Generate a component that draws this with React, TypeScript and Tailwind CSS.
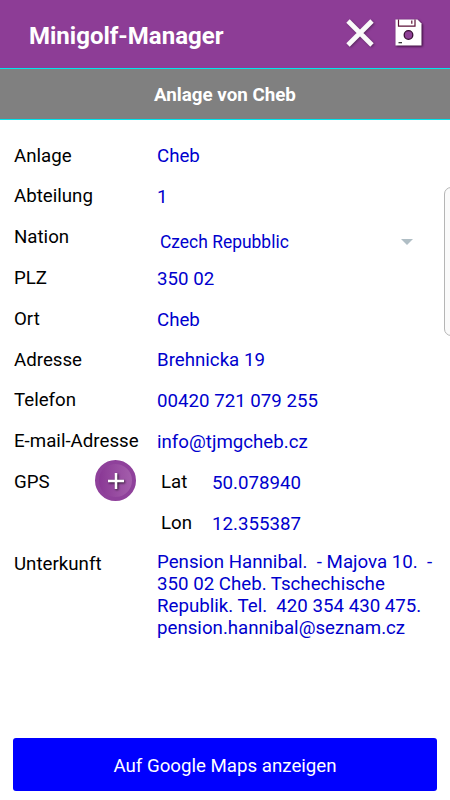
import React from 'react';

const FIELDS = [
  { label: 'Anlage', value: 'Cheb' },
  { label: 'Abteilung', value: '1' },
  { label: 'Nation', value: 'Czech Repubblic', select: true },
  { label: 'PLZ', value: '350 02' },
  { label: 'Ort', value: 'Cheb' },
  { label: 'Adresse', value: 'Brehnicka 19' },
  { label: 'Telefon', value: '00420 721 079 255' },
  { label: 'E-mail-Adresse', value: 'info@tjmgcheb.cz' },
];

const CloseIcon = () => (
  <svg width="30" height="30" viewBox="0 0 30 30" className="drop-shadow-[1px_1px_1px_rgba(0,0,0,0.35)]">
    <path d="M3 3 27 27M27 3 3 27" stroke="#fafafa" strokeWidth="4.8" fill="none" />
  </svg>
);

const SaveIcon = () => (
  <svg width="28" height="28" viewBox="0 0 28 28" className="drop-shadow-[1.5px_1.5px_1px_rgba(40,0,40,0.9)]">
    <path d="M0.5 0.5H22.5L26.5 4.5V26.5H0.5Z" fill="#fff" />
    <path d="M3.5 0.5V7.2H20V0.5M16.8 1.5V4.8" stroke="#5c1238" strokeWidth="1.2" fill="none" />
    <circle cx="13.5" cy="16" r="4.3" fill="#8e4096" stroke="#3a0d35" strokeWidth="1.3" />
    <path d="M3.5 23.7H7" stroke="#222" strokeWidth="1.2" />
  </svg>
);

const AddButton = () => (
  <button className="flex h-[41px] w-[41px] shrink-0 items-center justify-center rounded-full border-4 border-[#8f419b] bg-linear-to-r from-[#8a3895] to-[#a45eac]">
    <svg width="20" height="20" viewBox="0 0 20 20" className="drop-shadow-[1px_1px_1px_rgba(0,0,0,0.7)]">
      <path d="M10 2V18M2 10H18" stroke="#fff" strokeWidth="2.5" fill="none" />
    </svg>
  </button>
);

const Coordinate = ({ label, value }: { label: string; value: string }) => (
  <div className="flex h-[40.8px] items-center">
    <span className="w-[51px] pt-px">{label}</span>
    <span className="pt-0.5 text-[#0000cd]">{value}</span>
  </div>
);

export default function App() {
  return (
    <div className="relative flex h-[800px] w-[450px] flex-col overflow-hidden bg-white font-['Roboto',sans-serif] text-[18.7px] leading-[22px] text-black">
      <header className="flex h-[68px] shrink-0 items-center bg-[#8d3d96] pl-[29px] pr-[27px] text-white">
        <h1 className="flex-1 pt-[3px] text-[24px] leading-7 font-bold">Minigolf-Manager</h1>
        <div className="flex items-center gap-[20px] pb-0.5">
          <CloseIcon />
          <SaveIcon />
        </div>
      </header>
      <div className="h-px shrink-0 bg-[#00e5ee]" />
      <div className="flex h-[50px] shrink-0 items-center justify-center bg-[#808080] pt-0.5 text-[18.75px] font-bold text-white">
        Anlage von Cheb
      </div>
      <div className="h-px shrink-0 bg-[#00e5ee]" />

      <main className="flex-1 pt-[15px] pl-3.5">
        {FIELDS.map(field => (
          <div key={field.label} className="flex h-[40.8px] items-center">
            <span className="w-[143px] shrink-0 pt-[0.5px] whitespace-nowrap">{field.label}</span>
            {field.select ? (
              <div className="flex flex-1 items-center justify-between pt-2.5 pr-[37px] pl-[3px] text-[17.45px] text-[#0000cd]">
                {field.value}
                <svg width="12" height="6" viewBox="0 0 12 6">
                  <path d="M0 0H12L6 6Z" fill="#b0bec5" />
                </svg>
              </div>
            ) : (
              <span className="pt-0.5 text-[#0000cd]">{field.value}</span>
            )}
          </div>
        ))}

        <div className="flex">
          <div className="flex h-[40.8px] w-[147px] items-center">
            <span className="w-[81px] pt-px">GPS</span>
            <div className="pb-0.5">
              <AddButton />
            </div>
          </div>
          <div>
            <Coordinate label="Lat" value="50.078940" />
            <Coordinate label="Lon" value="12.355387" />
          </div>
        </div>

        <div className="flex">
          <span className="w-[143px] shrink-0 pt-2.5">Unterkunft</span>
          <p className="pt-2 whitespace-pre text-[#0000cd]">
            {'Pension Hannibal.  - Majova 10.  -\n350 02 Cheb. Tschechische\nRepublik. Tel.  420 354 430 475.\npension.hannibal@seznam.cz'}
          </p>
        </div>
      </main>

      <button className="mx-[13px] mb-[9px] h-[53px] shrink-0 rounded-[3px] bg-[#0000ff] pt-0.5 text-white">
        Auf Google Maps anzeigen
      </button>

      {/* edge panel handle */}
      <div className="absolute top-[187px] -right-2 h-[149px] w-[14px] rounded-[7px] border border-[#b5b5b5] bg-[#fafafa]" />
    </div>
  );
}
